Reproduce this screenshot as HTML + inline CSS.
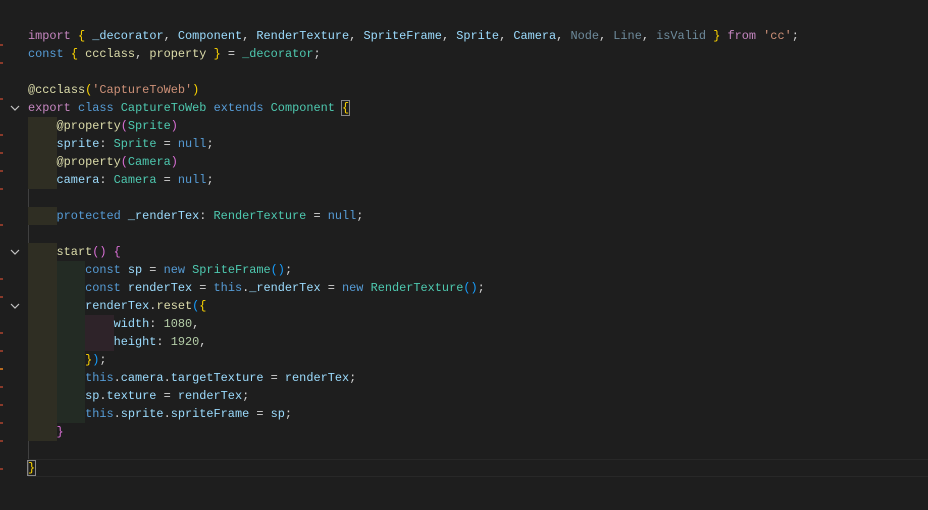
<!DOCTYPE html>
<html><head><meta charset="utf-8"><style>
html,body{margin:0;padding:0;background:#1e1e1e;width:928px;height:510px;overflow:hidden}
#ed{position:absolute;left:0;top:27px;width:928px;font-family:"Liberation Mono",monospace;font-size:11.9px;color:#d4d4d4}
.l{height:18px;line-height:18px;white-space:pre;padding-left:28px;position:relative}
.i{display:inline-block;width:4ch;height:18px;vertical-align:top}
.a{background:#2f2e23}.b{background:#232b24}.c{background:#2e2329}
.k{color:#c586c0}.bl{color:#569cd6}.v{color:#9cdcfe}.t{color:#4ec9b0}.s{color:#ce9178}.f{color:#dcdcaa}.y{color:#ffd700}.p{color:#da70d6}.n{color:#b5cea8}.d{color:#6e8b9c}
.chev{position:absolute;left:10px;top:5px}
#guide{position:absolute;left:28px;top:117px;width:1px;height:360px;background:#404040}
#cur{position:absolute;left:28px;top:459px;width:900px;height:16px;border-top:1px solid #282828;border-bottom:1px solid #282828}
.g{position:absolute;left:0;width:3px;height:2px;background:#8a3a2a}
</style></head><body>
<div id="guide"></div>
<div id="cur"></div>
<div class="g" style="top:44px"></div><div class="g" style="top:62px"></div><div class="g" style="top:98px"></div><div class="g" style="top:134px"></div><div class="g" style="top:152px"></div><div class="g" style="top:170px"></div><div class="g" style="top:188px"></div><div class="g" style="top:224px"></div><div class="g" style="top:278px"></div><div class="g" style="top:296px"></div><div class="g" style="top:332px"></div><div class="g" style="top:350px"></div><div class="g" style="top:368px;background:#b86a20"></div><div class="g" style="top:386px"></div><div class="g" style="top:404px"></div><div class="g" style="top:422px"></div><div class="g" style="top:440px"></div><div class="g" style="top:468px"></div>
<div id="ed">
<div class="l"><span class="k">import</span> <span class="y">{</span> <span class="v">_decorator</span>, <span class="v">Component</span>, <span class="v">RenderTexture</span>, <span class="v">SpriteFrame</span>, <span class="v">Sprite</span>, <span class="v">Camera</span>, <span class="d">Node</span>, <span class="d">Line</span>, <span class="d">isValid</span> <span class="y">}</span> <span class="k">from</span> <span class="s">'cc'</span>;</div>
<div class="l"><span class="bl">const</span> <span class="y">{</span> <span class="f">ccclass</span>, <span class="f">property</span> <span class="y">}</span> = <span class="t">_decorator</span>;</div>
<div class="l"></div>
<div class="l"><span class="f">@ccclass</span><span class="y">(</span><span class="s">'CaptureToWeb'</span><span class="y">)</span></div>
<div class="l"><svg class="chev" width="10" height="8"><path d="M1 2 L5 6 L9 2" stroke="#c5c5c5" fill="none" stroke-width="1.2"/></svg><span class="k">export</span> <span class="bl">class</span> <span class="t">CaptureToWeb</span> <span class="bl">extends</span> <span class="t">Component</span> <span class="y" style="outline:1px solid #888">{</span></div>
<div class="l"><span class="i a"></span><span class="f">@property</span><span class="p">(</span><span class="t">Sprite</span><span class="p">)</span></div>
<div class="l"><span class="i a"></span><span class="v">sprite</span>: <span class="t">Sprite</span> = <span class="bl">null</span>;</div>
<div class="l"><span class="i a"></span><span class="f">@property</span><span class="p">(</span><span class="t">Camera</span><span class="p">)</span></div>
<div class="l"><span class="i a"></span><span class="v">camera</span>: <span class="t">Camera</span> = <span class="bl">null</span>;</div>
<div class="l"></div>
<div class="l"><span class="i a"></span><span class="bl">protected</span> <span class="v">_renderTex</span>: <span class="t">RenderTexture</span> = <span class="bl">null</span>;</div>
<div class="l"></div>
<div class="l"><svg class="chev" width="10" height="8"><path d="M1 2 L5 6 L9 2" stroke="#c5c5c5" fill="none" stroke-width="1.2"/></svg><span class="i a"></span><span class="f">start</span><span class="p">()</span> <span class="p">{</span></div>
<div class="l"><span class="i a"></span><span class="i b"></span><span class="bl">const</span> <span class="v">sp</span> = <span class="bl">new</span> <span class="t">SpriteFrame</span><span style="color:#179fff">()</span>;</div>
<div class="l"><span class="i a"></span><span class="i b"></span><span class="bl">const</span> <span class="v">renderTex</span> = <span class="bl">this</span>.<span class="v">_renderTex</span> = <span class="bl">new</span> <span class="t">RenderTexture</span><span style="color:#179fff">()</span>;</div>
<div class="l"><svg class="chev" width="10" height="8"><path d="M1 2 L5 6 L9 2" stroke="#c5c5c5" fill="none" stroke-width="1.2"/></svg><span class="i a"></span><span class="i b"></span><span class="v">renderTex</span>.<span class="f">reset</span><span style="color:#179fff">(</span><span class="y">{</span></div>
<div class="l"><span class="i a"></span><span class="i b"></span><span class="i c"></span><span class="v">width</span>: <span class="n">1080</span>,</div>
<div class="l"><span class="i a"></span><span class="i b"></span><span class="i c"></span><span class="v">height</span>: <span class="n">1920</span>,</div>
<div class="l"><span class="i a"></span><span class="i b"></span><span class="y">}</span><span style="color:#179fff">)</span>;</div>
<div class="l"><span class="i a"></span><span class="i b"></span><span class="bl">this</span>.<span class="v">camera</span>.<span class="v">targetTexture</span> = <span class="v">renderTex</span>;</div>
<div class="l"><span class="i a"></span><span class="i b"></span><span class="v">sp</span>.<span class="v">texture</span> = <span class="v">renderTex</span>;</div>
<div class="l"><span class="i a"></span><span class="i b"></span><span class="bl">this</span>.<span class="v">sprite</span>.<span class="v">spriteFrame</span> = <span class="v">sp</span>;</div>
<div class="l"><span class="i a"></span><span class="p">}</span></div>
<div class="l"></div>
<div class="l"><span class="y" style="outline:1px solid #888">}</span></div>
</div>
</body></html>
